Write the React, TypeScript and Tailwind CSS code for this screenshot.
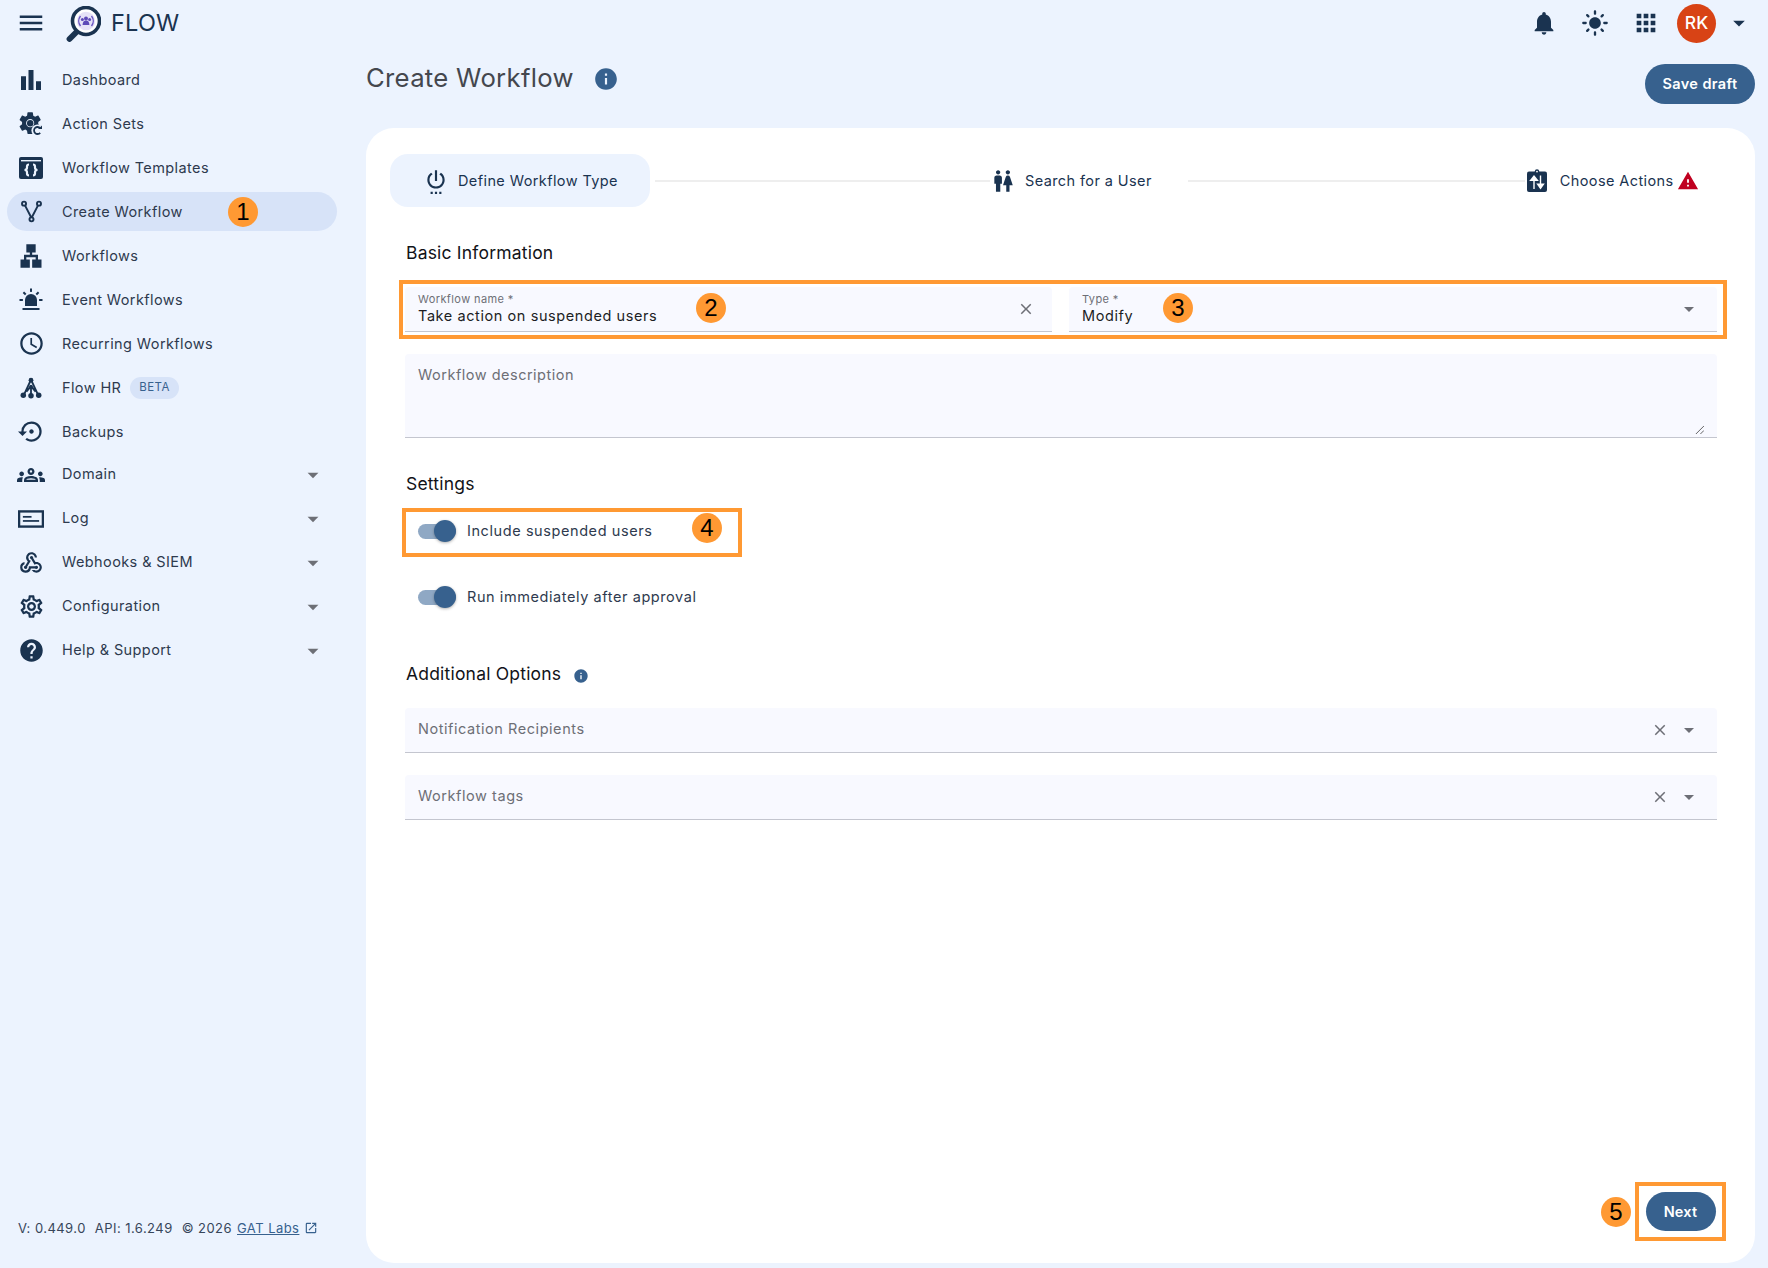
import React from 'react';
import {
  MdMenu, MdBarChart, MdLan, MdOutlineSchedule, MdSettingsBackupRestore, MdOutlineGroups, MdOutlineWebhook,
  MdOutlineSettings, MdHelp, MdNotifications, MdLightMode, MdApps, MdSettingsPower, MdWc, MdWarning, MdInfo,
  MdClose, MdArrowDropDown, MdOpenInNew,
} from 'react-icons/md';

const gearPath =
  'M19.14 12.94c.04-.3.06-.61.06-.94 0-.32-.02-.64-.07-.94l2.03-1.58c.18-.14.23-.41.12-.61l-1.92-3.32c-.12-.22-.37-.29-.59-.22l-2.39.96c-.5-.38-1.03-.7-1.62-.94l-.36-2.54c-.04-.24-.24-.41-.48-.41h-3.84c-.24 0-.43.17-.47.41l-.36 2.54c-.59.24-1.13.57-1.62.94l-2.39-.96c-.22-.08-.47 0-.59.22L2.74 8.87c-.12.21-.08.47.12.61l2.03 1.58c-.05.3-.09.63-.09.94s.02.64.07.94l-2.03 1.58c-.18.14-.23.41-.12.61l1.92 3.32c.12.22.37.29.59.22l2.39-.96c.5.38 1.03.7 1.62.94l.36 2.54c.05.24.24.41.48.41h3.84c.24 0 .44-.17.47-.41l.36-2.54c.59-.24 1.13-.56 1.62-.94l2.39.96c.22.08.47 0 .59-.22l1.92-3.32c.12-.22.07-.47-.12-.61l-2.01-1.58zM12 15.6c-1.98 0-3.6-1.62-3.6-3.6s1.62-3.6 3.6-3.6 3.6 1.62 3.6 3.6-1.62 3.6-3.6 3.6z';

function ActionSetsIcon({ className }: { className?: string }) {
  return (
    <svg viewBox="0 0 24 24" className={className} fill="currentColor">
      <path d={gearPath} transform="translate(-2.4 -2.4) scale(1.13)" />
      <circle cx="11.2" cy="11.2" r="3.2" />
      <circle cx="18.4" cy="18.4" r="6" fill="#ecf3fe" />
      <path d="M21.2 16.2 A3.5 3.5 0 1 0 21.2 20.8" fill="none" stroke="currentColor" strokeWidth="1.8" />
      <path d="M19 17h4v-3.6z" />
    </svg>
  );
}

function TemplateIcon({ className }: { className?: string }) {
  return (
    <svg viewBox="0 0 24 24" className={className}>
      <rect x="0" y="1" width="24" height="22" rx="2" fill="currentColor" />
      <rect x="2" y="4" width="20" height="1.4" fill="#ecf3fe" />
      <path
        d="M10 8.5C8.4 8.5 8 9.2 8 10.4v1.4c0 1-.6 2-2.4 2.2C7.4 14.200 8 15.200 8 16.200v1.400c0 1.200.4 1.900 2 1.900M14 8.500c1.600 0 2 .7 2 1.900v1.400c0 1 .6 2 2.400 2.200-1.800.2-2.400 1.200-2.400 2.200v1.400c0 1.200-.4 1.900-2 1.900"
        fill="none"
        stroke="#ecf3fe"
        strokeWidth="2.200"
      />
    </svg>
  );
}

function ForkIcon({ className }: { className?: string }) {
  return (
    <svg viewBox="0 0 24 24" className={className} fill="none" stroke="currentColor" strokeWidth="2">
      <circle cx="4.2" cy="3.800" r="2.100" />
      <circle cx="19.800" cy="3.800" r="2.100" />
      <circle cx="12" cy="20.200" r="2.100" />
      <path d="M5.200 5.600 11.600 18 M18.800 5.600 12.400 18" />
    </svg>
  );
}

function SirenIcon({ className }: { className?: string }) {
  return (
    <svg viewBox="0 0 24 24" className={className} fill="currentColor">
      <path d="M6 18v-6a6 6 0 0 1 12 0v6z" />
      <rect x="3.500" y="20" width="17" height="2" />
      <rect x="11" y="0.500" width="2" height="3.400" />
      <rect x="0.500" y="11" width="3.400" height="2" />
      <rect x="20.100" y="11" width="3.400" height="2" />
      <path d="M3.700 4.900 5.100 3.500 7.400 5.800 6 7.200zM20.300 4.900 18.900 3.500 16.600 5.800 18 7.200z" />
    </svg>
  );
}

function HrIcon({ className }: { className?: string }) {
  return (
    <svg viewBox="0 0 24 24" className={className} fill="none" stroke="currentColor" strokeWidth="2">
      <path d="M12 3 4 20M12 3 20 20M12 10 12 20M12 10 7 16M12 10 17 16" />
      <g fill="currentColor" stroke="none">
        <circle cx="12" cy="3.500" r="2.600" />
        <circle cx="12" cy="10.500" r="2" />
        <circle cx="3.600" cy="20" r="3" />
        <circle cx="12" cy="20.500" r="3" />
        <circle cx="20.400" cy="20" r="3" />
      </g>
    </svg>
  );
}

function LogIcon({ className }: { className?: string }) {
  return (
    <svg viewBox="0 0 24 24" className={className}>
      <rect x="1" y="5" width="22" height="14" fill="none" stroke="currentColor" strokeWidth="2.200" />
      <rect x="4.500" y="9.200" width="8" height="1.600" fill="currentColor" />
      <rect x="4.500" y="13" width="15" height="1.600" fill="currentColor" />
    </svg>
  );
}

function ChooseIcon({ className }: { className?: string }) {
  return (
    <svg viewBox="0 0 24 24" className={className}>
      <rect x="2" y="2.500" width="20" height="20.500" rx="2" fill="#1a3350" />
      <circle cx="12" cy="2.400" r="2.200" fill="#1a3350" />
      <circle cx="12" cy="2.600" r="0.900" fill="#ffffff" />
      <path d="M9 20V8.500M5.600 11.400 9 7.200l3.400 4.200z" fill="#ffffff" stroke="#ffffff" strokeWidth="1.400" />
      <path d="M15.500 6.500V18M12.600 15.200l2.900 4 2.900-4z" fill="#ffffff" stroke="#ffffff" strokeWidth="1.400" />
    </svg>
  );
}

function Logo() {
  return (
    <svg viewBox="0 0 36 36" className="h-[36px] w-[36px]">
      <path d="M4.500 33 12.500 25" stroke="#1a3350" strokeWidth="5.800" strokeLinecap="round" />
      <circle cx="21" cy="15" r="13.500" fill="#ffffff" stroke="#1a3350" strokeWidth="3.600" />
      <circle cx="21" cy="15" r="9.200" fill="#e6e2f7" />
      <path d="M15.500 10a8 8 0 0 0 0 10M26.500 10a8 8 0 0 1 0 10" fill="none" stroke="#6a55c2" strokeWidth="1.400" />
      <g fill="#5e49b8">
        <circle cx="21" cy="12.500" r="2" />
        <circle cx="17.400" cy="13.400" r="1.500" />
        <circle cx="24.600" cy="13.400" r="1.500" />
        <path d="M17.600 19c0-3 1.400-4.400 3.400-4.400s3.400 1.400 3.400 4.400z" />
      </g>
    </svg>
  );
}

function Badge({ n, className }: { n: number; className: string }) {
  return (
    <span
      className={`absolute flex h-[30px] w-[30px] items-center justify-center rounded-full bg-[#ff9933] font-['Liberation_Sans',sans-serif] text-[24px] leading-none tracking-normal text-black ${className}`}
    >
      {n}
    </span>
  );
}

const navTop = [
  { label: 'Dashboard', Icon: MdBarChart, size: 'w-[30px] h-[30px]' },
  { label: 'Action Sets', Icon: ActionSetsIcon, size: 'w-[24px] h-[24px]' },
  { label: 'Workflow Templates', Icon: TemplateIcon, size: 'w-[24px] h-[24px]' },
  { label: 'Create Workflow', Icon: ForkIcon, size: 'w-[23px] h-[23px]', active: true },
  { label: 'Workflows', Icon: MdLan, size: 'w-[28px] h-[28px]' },
  { label: 'Event Workflows', Icon: SirenIcon, size: 'w-[24px] h-[24px]' },
  { label: 'Recurring Workflows', Icon: MdOutlineSchedule, size: 'w-[27px] h-[27px]' },
  { label: 'Flow HR', Icon: HrIcon, size: 'w-[22px] h-[22px]', beta: true },
  { label: 'Backups', Icon: MdSettingsBackupRestore, size: 'w-[27px] h-[27px]' },
];

const navGroups = [
  { label: 'Domain', Icon: MdOutlineGroups, size: 'w-[28px] h-[28px]' },
  { label: 'Log', Icon: LogIcon, size: 'w-[26px] h-[26px]' },
  { label: 'Webhooks & SIEM', Icon: MdOutlineWebhook, size: 'w-[26px] h-[26px]' },
  { label: 'Configuration', Icon: MdOutlineSettings, size: 'w-[27px] h-[27px]' },
  { label: 'Help & Support', Icon: MdHelp, size: 'w-[27px] h-[27px]' },
];

function Toggle() {
  return (
    <span className="relative block h-[15px] w-[38px] rounded-full bg-[#8fa8c4]">
      <span className="absolute left-[16px] top-[-4px] h-[22px] w-[22px] rounded-full bg-[#37618e] shadow-[0_1px_3px_rgba(0,0,0,0.3)]" />
    </span>
  );
}

function SelectField({ label }: { label: string }) {
  return (
    <div className="flex h-[45px] items-center rounded-t-[4px] border-b border-[#c4c6cf] bg-[#f8f9ff] pl-[13px] pr-[16px] text-[#6d6f76]">
      <span className="flex-1 pb-[2px] text-[14.5px] tracking-[0.55px]">{label}</span>
      <MdClose className="mr-[8px] h-[18px] w-[18px]" />
      <MdArrowDropDown className="h-[24px] w-[24px]" />
    </div>
  );
}

export default function App() {
  return (
    <div className="flex h-[1268px] w-[1768px] flex-col overflow-hidden bg-[#ecf3fe] font-['Inter',sans-serif] tracking-[0.4px] text-[#2e3a4e]">
      {/* top bar */}
      <header className="flex h-[46px] items-center">
        <MdMenu className="ml-[16px] h-[30px] w-[30px] text-[#1a3350]" />
        <div className="ml-[19px] mt-[1px]">
          <Logo />
        </div>
        <span className="ml-[10px] text-[23.5px] tracking-[0.2px] text-[#1a3350]">FLOW</span>
        <div className="ml-auto flex items-center pr-[15px] text-[#1a3350]">
          <MdNotifications className="h-[28px] w-[28px]" />
          <MdLightMode className="ml-[23px] h-[28px] w-[28px]" />
          <MdApps className="ml-[23px] h-[28px] w-[28px]" />
          <span className="ml-[17px] flex h-[39px] w-[39px] items-center justify-center rounded-full bg-[#d84315] text-[17.5px] font-medium tracking-normal text-white">
            RK
          </span>
          <MdArrowDropDown className="ml-[9px] h-[28px] w-[28px]" />
        </div>
      </header>

      <div className="flex flex-1">
        {/* sidebar */}
        <aside className="flex w-[366px] flex-col pb-[30px] pl-[7px] pr-[29px] pt-[14px]">
          <nav className="flex flex-col gap-[5px]">
            {navTop.map(({ label, Icon, size, active, beta }) => (
              <div
                key={label}
                className={`relative flex h-[39px] items-center rounded-full text-[14.5px] ${active ? 'bg-[#d7e3f8]' : ''}`}
              >
                <span className="mr-[7px] flex w-[48px] justify-center text-[#1a3350]">
                  <Icon className={size} />
                </span>
                <span>{label}</span>
                {beta && (
                  <span className="ml-[9px] mt-[1px] rounded-full bg-[#d7e3f8] px-[9px] py-[2px] text-[11.5px] text-[#37618e]">
                    BETA
                  </span>
                )}
                {active && <Badge n={1} className="left-[221px] top-[5px]" />}
              </div>
            ))}
          </nav>
          <nav className="mt-[4px] flex flex-col gap-[5px]">
            {navGroups.map(({ label, Icon, size }) => (
              <div key={label} className="flex h-[39px] items-center text-[14.5px]">
                <span className="mr-[7px] flex w-[48px] justify-center text-[#1a3350]">
                  <Icon className={size} />
                </span>
                <span className="flex-1 pb-[2px]">{label}</span>
                <MdArrowDropDown className="mr-[11px] h-[26px] w-[26px] text-[#6d6f76]" />
              </div>
            ))}
          </nav>
          <footer className="mt-auto flex items-center pl-[11px] text-[13px] tracking-[0.45px] text-[#37465a]">
            <span>V: 0.449.0</span>
            <span className="ml-[9px]">API: 1.6.249</span>
            <span className="ml-[9px]">© 2026</span>
            <span className="ml-[5px] text-[#37618e] underline">GAT Labs</span>
            <MdOpenInNew className="ml-[5px] h-[14px] w-[14px] text-[#37618e]" />
          </footer>
        </aside>

        {/* main */}
        <main className="flex flex-1 flex-col pb-[5px] pr-[13px]">
          <div className="mb-[24px] mt-[18px] flex h-[40px] items-center">
            <div className="mb-[11px] flex items-center">
              <h1 className="text-[25.7px] font-normal tracking-[0.3px] text-[#44474e]">Create Workflow</h1>
              <MdInfo className="ml-[19px] h-[26px] w-[26px] text-[#37618e]" />
            </div>
            <button className="ml-auto h-[40px] w-[110px] rounded-full bg-[#37618e] text-[14.5px] font-semibold tracking-[0.4px] text-white">
              Save draft
            </button>
          </div>

          <section className="flex flex-1 flex-col rounded-[28px] bg-white pl-[24px] pr-[24px] pt-[26px]">
            {/* stepper */}
            <div className="flex h-[53px] items-center text-[14.5px] text-[#1a3350]">
              <div className="flex h-[53px] w-[260px] items-center rounded-[18px] bg-[#ecf3fe] pl-[33px]">
                <MdSettingsPower className="h-[26px] w-[26px] text-[#1a3350]" />
                <span className="ml-[9px]">Define Workflow Type</span>
              </div>
              <span className="ml-[5px] h-[2px] w-[335px] bg-[#eeeeee]" />
              <MdWc className="h-[26px] w-[26px]" />
              <span className="ml-[9px]">Search for a User</span>
              <span className="ml-[36px] h-[2px] w-[337px] bg-[#eeeeee]" />
              <ChooseIcon className="h-[24px] w-[24px]" />
              <span className="ml-[11px]">Choose Actions</span>
              <MdWarning className="ml-[3px] h-[22px] w-[22px] text-[#c00020]" />
            </div>

            <div className="flex flex-1 flex-col pl-[15px] pr-[14px] tracking-[0.58px]">
              <h2 className="mt-[34px] h-[24px] pl-[1px] text-[17.5px] font-normal leading-[24px] tracking-[0.2px] text-[#111318]">
                Basic Information
              </h2>

              <div className="relative ml-[-6px] mr-[-10px] mt-[15px] flex h-[59px] gap-[17px] border-4 border-[#ff9933] pb-[3px] pl-[2px] pr-[6px] pt-[3px]">
                <div className="flex h-[45px] w-[647px] items-center rounded-t-[4px] border-b border-[#c4c6cf] bg-[#f8f9ff] pl-[13px] pr-[17px]">
                  <div className="flex-1 pb-[2px]">
                    <div className="text-[11px] leading-[14px] tracking-[0.4px] text-[#6d6f76]">Workflow name *</div>
                    <div className="text-[14.5px] leading-[19px] text-[#1c1e24]">Take action on suspended users</div>
                  </div>
                  <MdClose className="h-[18px] w-[18px] text-[#6d6f76]" />
                </div>
                <div className="flex h-[45px] w-[648px] items-center rounded-t-[4px] border-b border-[#c4c6cf] bg-[#f8f9ff] pl-[13px] pr-[16px]">
                  <div className="flex-1 pb-[2px]">
                    <div className="text-[11px] leading-[14px] tracking-[0.4px] text-[#6d6f76]">Type *</div>
                    <div className="text-[14.5px] leading-[19px] text-[#1c1e24]">Modify</div>
                  </div>
                  <MdArrowDropDown className="h-[24px] w-[24px] text-[#6d6f76]" />
                </div>
                <Badge n={2} className="left-[293px] top-[9px]" />
                <Badge n={3} className="left-[760px] top-[9px]" />
              </div>

              <div className="relative mt-[15px] h-[84px] rounded-t-[4px] border-b border-[#c4c6cf] bg-[#f8f9ff] pl-[13px] pt-[10px] text-[14.5px] tracking-[0.5px] text-[#6d6f76]">
                Workflow description
                <svg viewBox="0 0 10 10" className="absolute bottom-[3px] right-[13px] h-[9px] w-[9px]" stroke="#555" strokeWidth="1">
                  <path d="M1 10 10 1M6 10 10 6" />
                </svg>
              </div>

              <h2 className="mt-[34px] h-[24px] pl-[1px] text-[17.5px] font-normal leading-[24px] tracking-[0.2px] text-[#111318]">
                Settings
              </h2>

              <div className="relative ml-[-3px] mt-[12px] flex h-[49px] w-[340px] items-center border-4 border-[#ff9933] pb-[3px] pl-[12px] text-[14.5px]">
                <Toggle />
                <span className="ml-[11px]">Include suspended users</span>
                <Badge n={4} className="left-[286px] top-[1px]" />
              </div>

              <div className="ml-[13px] mt-[20px] flex h-[40px] items-center text-[14.5px]">
                <Toggle />
                <span className="ml-[11px]">Run immediately after approval</span>
              </div>

              <div className="mt-[45px] flex h-[24px] items-center pl-[1px]">
                <h2 className="text-[17.5px] font-normal leading-[24px] tracking-[0.2px] text-[#111318]">
                  Additional Options
                </h2>
                <MdInfo className="ml-[12px] mt-[3px] h-[16px] w-[16px] text-[#37618e]" />
              </div>

              <div className="mt-[22px]">
                <SelectField label="Notification Recipients" />
              </div>
              <div className="mt-[22px]">
                <SelectField label="Workflow tags" />
              </div>

              <div className="relative mb-[22px] mr-[-9px] mt-auto flex h-[59px] w-[91px] items-center justify-center self-end border-4 border-[#ff9933]">
                <button className="h-[39px] w-[70px] rounded-full bg-[#37618e] text-[14.5px] font-semibold tracking-[0.2px] text-white">
                  Next
                </button>
                <Badge n={5} className="left-[-38px] top-[11px]" />
              </div>
            </div>
          </section>
        </main>
      </div>
    </div>
  );
}
